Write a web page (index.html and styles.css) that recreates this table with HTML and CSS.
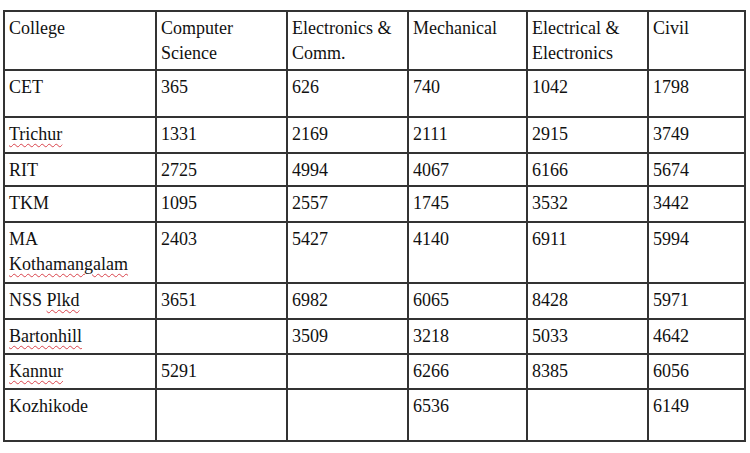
FILE: index.html
```html
<!DOCTYPE html>
<html>
<head>
<meta charset="utf-8">
<link rel="stylesheet" href="styles.css">
</head>
<body>
<table class="grid">
  <colgroup>
    <col class="c1"><col class="c2"><col class="c3"><col class="c4"><col class="c5"><col class="c6">
  </colgroup>
  <tr class="r-head">
    <td>College</td><td>Computer Science</td><td>Electronics &amp; Comm.</td><td>Mechanical</td><td>Electrical &amp; Electronics</td><td>Civil</td>
  </tr>
  <tr class="r-cet">
    <td>CET</td><td>365</td><td>626</td><td>740</td><td>1042</td><td>1798</td>
  </tr>
  <tr class="r-36">
    <td><span class="sp">Trichur</span></td><td>1331</td><td>2169</td><td>2111</td><td>2915</td><td>3749</td>
  </tr>
  <tr class="r-33">
    <td>RIT</td><td>2725</td><td>4994</td><td>4067</td><td>6166</td><td>5674</td>
  </tr>
  <tr class="r-36">
    <td>TKM</td><td>1095</td><td>2557</td><td>1745</td><td>3532</td><td>3442</td>
  </tr>
  <tr class="r-ma">
    <td>MA <span class="sp">Kothamangalam</span></td><td>2403</td><td>5427</td><td>4140</td><td>6911</td><td>5994</td>
  </tr>
  <tr class="r-36">
    <td>NSS <span class="sp">Plkd</span></td><td>3651</td><td>6982</td><td>6065</td><td>8428</td><td>5971</td>
  </tr>
  <tr class="r-35">
    <td><span class="sp">Bartonhill</span></td><td></td><td>3509</td><td>3218</td><td>5033</td><td>4642</td>
  </tr>
  <tr class="r-35">
    <td><span class="sp">Kannur</span></td><td>5291</td><td></td><td>6266</td><td>8385</td><td>6056</td>
  </tr>
  <tr class="r-last">
    <td>Kozhikode</td><td></td><td></td><td>6536</td><td></td><td>6149</td>
  </tr>
</table>
</body>
</html>
```
FILE: styles.css
```css
html, body {
  margin: 0;
  padding: 0;
  background: #ffffff;
}
body {
  padding: 10px 0 0 3px;
}
.grid {
  border-collapse: collapse;
  table-layout: fixed;
  width: 743px;
  font-family: "Liberation Serif", "Times New Roman", serif;
  font-size: 18px;
  color: #111111;
}
.c1 { width: 152px; }
.c2 { width: 131px; }
.c3 { width: 121px; }
.c4 { width: 119px; }
.c5 { width: 121px; }
.c6 { width: 97px; }
.grid td {
  font-family: "Liberation Serif", "Times New Roman", serif;
  border: 2px solid #333333;
  vertical-align: top;
  padding: 4px 4px 0 4px;
  line-height: 25px;
  overflow: hidden;
  box-sizing: border-box;
}
.r-head td { height: 59px; }
.r-cet td { height: 47px; }
.r-36 td { height: 36px; }
.r-33 td { height: 33px; }
.r-35 td { height: 35px; }
.r-ma td { height: 61px; }
.r-last td { height: 52px; }
.sp {
  text-decoration: underline wavy #d9434b;
  text-decoration-thickness: 1px;
  text-underline-offset: 3px;
}
```
